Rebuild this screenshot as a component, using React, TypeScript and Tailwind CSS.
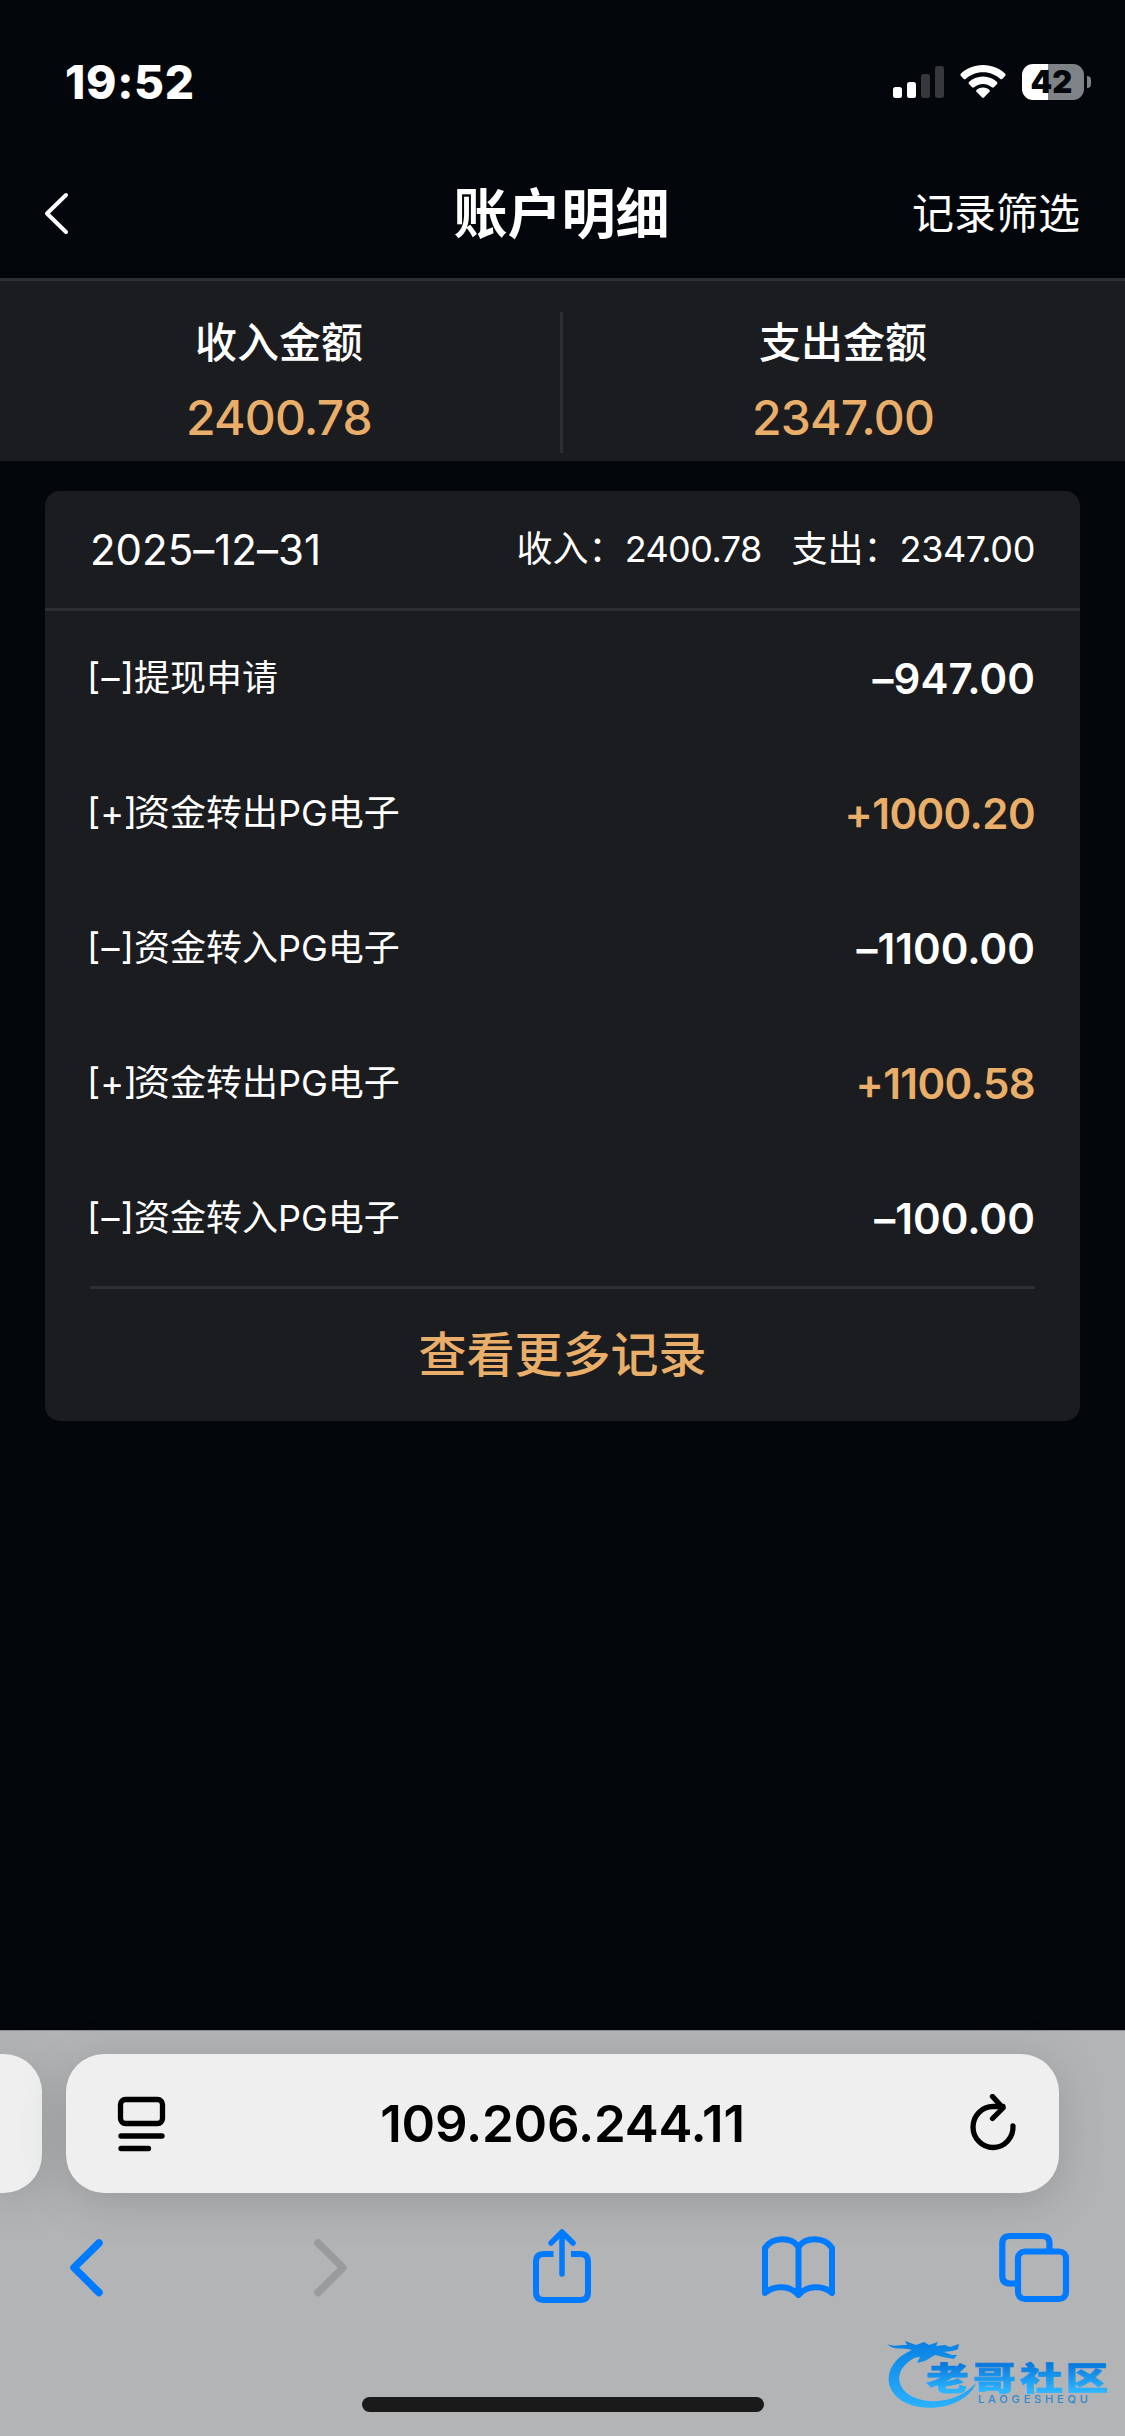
import React from "react";

type Entry = { sign: "+" | "–"; label: string; amount: string };

const entries: Entry[] = [
  { sign: "–", label: "提现申请", amount: "947.00" },
  { sign: "+", label: "资金转出PG电子", amount: "1000.20" },
  { sign: "–", label: "资金转入PG电子", amount: "1100.00" },
  { sign: "+", label: "资金转出PG电子", amount: "1100.58" },
  { sign: "–", label: "资金转入PG电子", amount: "100.00" },
];

function StatusBar() {
  return (
    <div className="flex h-[148px] items-start justify-between pt-[54px] pr-[34px] pl-[65px]">
      <span className="text-[46px] leading-[56px] font-extrabold tracking-[0.7px]">19:52</span>
      <div className="flex pt-[8px]">
        <svg className="h-[40px] w-[115px]" viewBox="892 62 115 40" fill="#fff">
          <rect x="893" y="87" width="9" height="11" rx="2.5" />
          <rect x="907" y="82" width="9" height="16" rx="2.5" />
          <rect x="921" y="74" width="9" height="24" rx="2.5" fill="#35373b" />
          <rect x="935" y="66" width="9" height="32" rx="2.5" fill="#35373b" />
          <path d="M983 65C974 65 966 68.500 960.500 74L960.500 75.500L964 79.300L965.300 79.300C970 75 976 72.300 983 72.300C990 72.300 996 75 1000.700 79.300L1002 79.300L1005.500 75.500L1005.500 74C1000 68.500 992 65 983 65Z" />
          <path d="M983 76.500C977.500 76.500 972.500 78.700 968.700 82.200L968.700 83.700L972.400 87.600L973.700 87.600C976.200 85.300 979.400 83.900 983 83.900C986.600 83.900 989.800 85.300 992.300 87.600L993.600 87.600L997.300 83.700L997.300 82.200C993.500 78.700 988.500 76.500 983 76.500Z" />
          <path d="M983 87.600C980.300 87.600 978 88.600 976.300 90.200L976.300 91.400L982.300 97.800L983.700 97.800L989.700 91.400L989.700 90.200C988 88.600 985.700 87.600 983 87.600Z" />
        </svg>
        <div className="mt-[2px] ml-[15px] flex h-[36px] w-[62px] items-center justify-center rounded-[11px] bg-[linear-gradient(90deg,#fff_26px,#808386_26px)] pr-[3px] text-[31px] leading-[36px] font-black text-[#04070c]">
          42
        </div>
        <div className="mt-[14px] ml-[3px] h-[12px] w-[4px] rounded-r-full bg-[#808386]" />
      </div>
    </div>
  );
}

function NavBar() {
  return (
    <header className="grid h-[133px] grid-cols-[1fr_auto_1fr] items-center border-b-[3px] border-[#2b2f32] pr-[45px] pl-[40px]">
      <svg className="h-[50px] w-[34px]" viewBox="40 188 34 50" fill="none" stroke="#fff" strokeWidth="4" strokeLinecap="round" strokeLinejoin="round">
        <path d="M66 195L47 213.500L66 232" />
      </svg>
      <h1 className="ml-[3px] pt-[3px] text-[54px] leading-[60px] font-bold">账户明细</h1>
      <span className="justify-self-end pt-px text-[42px] leading-[50px]">记录筛选</span>
    </header>
  );
}

function Total({ label, value }: { label: string; value: string }) {
  return (
    <div className="flex flex-col items-center pt-[34px] pr-[2px]">
      <span className="text-[42px] leading-[56px] font-medium">{label}</span>
      <span className="mt-[18px] text-[48px] leading-[58px] font-[450] tracking-[-0.8px] text-[#e9ae6a]">{value}</span>
    </div>
  );
}

function Toolbar() {
  const box = "h-[90px] w-[100px]";
  const blue = { fill: "none", stroke: "#007aff", strokeLinecap: "round", strokeLinejoin: "round" } as const;
  return (
    <nav className="flex justify-between pt-[27px] pr-[41px] pl-[36px]">
      <svg className={box} viewBox="36 2220 100 90" {...blue} strokeWidth="7.500">
        <path d="M99 2243L74 2267.700L99 2292.500" />
      </svg>
      <svg className={box} viewBox="273 2220 100 90" {...blue} stroke="#9a9b9d" strokeWidth="7.500">
        <path d="M318 2243L343 2267.700L318 2292.500" />
      </svg>
      <svg className={box} viewBox="510 2220 100 90" {...blue} strokeWidth="6">
        <path strokeLinecap="butt" d="M553.500 2254H544C538.500 2254 536 2256.500 536 2262V2292C536 2297.500 538.500 2300 544 2300H580C585.500 2300 588 2297.500 588 2292V2262C588 2256.500 585.500 2254 580 2254H571" />
        <path strokeWidth="5.500" d="M562 2274V2232M551 2243L562 2232L573 2243" />
      </svg>
      <svg className={box} viewBox="747 2220 100 90" {...blue} strokeWidth="6">
        <path d="M798.500 2247C792 2237 773 2236 765 2248V2293C774 2285 790 2285 798.500 2295C807 2285 823 2285 832 2293V2248C824 2236 805 2237 798.500 2247V2294" />
      </svg>
      <svg className={box} viewBox="984 2220 100 90" {...blue} strokeWidth="6.200">
        <rect x="1018" y="2251.500" width="48" height="47.500" rx="7" />
        <path strokeLinecap="butt" d="M1017 2283.500H1010C1005 2283.500 1002.300 2281 1002.300 2276V2243.500C1002.300 2238.500 1005 2236 1010 2236H1042C1047 2236 1049.500 2238.500 1049.500 2243.500V2250" />
      </svg>
    </nav>
  );
}

function Watermark() {
  return (
    <svg className="absolute top-[2330px] left-[880px] h-[90px] w-[240px]" viewBox="880 2330 240 90">
      <defs>
        <linearGradient id="ring" x1="0" y1="2340" x2="0" y2="2409" gradientUnits="userSpaceOnUse">
          <stop offset="0" stopColor="#087fe2" />
          <stop offset="1" stopColor="#2bb2ff" />
        </linearGradient>
        <linearGradient id="word" x1="0" y1="-28" x2="0" y2="2" gradientUnits="userSpaceOnUse">
          <stop offset="0" stopColor="#0878dc" />
          <stop offset="1" stopColor="#2db6ff" />
        </linearGradient>
      </defs>
      <g fill="url(#ring)">
        <path d="M912 2350C883 2362 881 2391 906 2403C934 2415 969 2403 976 2383C963 2398 936 2407 913 2397C893 2387 894 2365 921 2355Z" />
        <path d="M887 2344C893 2347 899 2345 907 2345L905 2341L916 2345L924 2342L929 2345L938 2342L936 2346L945 2345L950 2347L959 2344L958 2349C953 2352 947 2351 944 2352L952 2355L957 2355L954 2359L943 2357L935 2355L925 2361L917 2363L920 2357L911 2358L902 2357L912 2350C903 2347 894 2351 887 2344Z" />
      </g>
      <g fill="url(#word)" stroke="url(#word)" strokeWidth="0.8" fontFamily="'Noto Sans CJK SC', sans-serif" fontWeight="900" fontSize="34">
        <text transform="translate(926 2389.500) scale(1.250 .92)">老</text>
        <text transform="translate(973 2389.500) scale(1.250 .92)">哥</text>
        <text transform="translate(1020 2389.500) scale(1.250 .92)">社</text>
        <text transform="translate(1065.500 2389.500) scale(1.250 .92)">区</text>
      </g>
      <text x="978" y="2402.500" textLength="110" fontFamily="Inter, sans-serif" fontSize="11" fontWeight="500" fill="#2f88cf">LAOGESHEQU</text>
    </svg>
  );
}

function BrowserBar() {
  return (
    <footer className="flex h-[406px] flex-col border-t border-[#8e8f93] bg-[#b3b4b6]">
      <div className="flex gap-[24px] overflow-x-clip pt-[23px] pr-[66px]">
        <div className="h-[139px] w-[42px] shrink-0 rounded-r-[38px] bg-[#efefef] shadow-[0_8px_44px_rgba(80,90,90,0.3)]" />
        <div className="flex h-[139px] flex-1 items-center justify-between rounded-[38px] bg-[#efefef] pr-[40px] pl-[50px] text-black shadow-[0_8px_44px_rgba(80,90,90,0.3)]">
          <svg className="h-[60px] w-[52px]" viewBox="116 2094 52 60" fill="none" stroke="#000" strokeWidth="5.300" strokeLinecap="round">
            <rect x="120.500" y="2099.500" width="42" height="24" rx="5" />
            <path d="M121 2136H162M121 2148.500H148.500" />
          </svg>
          <span className="mr-[10px] text-[51px] leading-[60px] font-[600] tracking-[-0.2px]">109.206.244.11</span>
          <svg className="h-[60px] w-[52px]" viewBox="967 2093 52 60" fill="none" stroke="#000" strokeWidth="5.300" strokeLinecap="round" strokeLinejoin="round">
            <path d="M1013 2125A20 20.500 0 1 1 993.500 2105.500H1003" />
            <path d="M992.500 2095.500L1003 2107L992.500 2117.500" />
          </svg>
        </div>
      </div>
      <Toolbar />
      <div className="mt-[87px] ml-[362px] h-[15px] w-[402px] rounded-full bg-[#1a1a1a]" />
    </footer>
  );
}

export default function App() {
  return (
    <div className="relative flex h-[2436px] w-[1125px] flex-col overflow-hidden bg-[#03070c] font-[Inter,'Noto_Sans_CJK_SC',sans-serif] text-white">
      <StatusBar />
      <NavBar />
      <section className="grid h-[180px] grid-cols-[560px_3px_562px] bg-[#1b1c20]">
        <Total label="收入金额" value="2400.78" />
        <div className="mt-[31px] h-[141px] bg-[#2d2e33]" />
        <Total label="支出金额" value="2347.00" />
      </section>
      <main className="flex-1 px-[45px] pt-[30px] [font-feature-settings:'calt'_0]">
        <article className="flex h-[930px] flex-col rounded-[15px] bg-[#1b1c20]">
          <div className="flex h-[120px] items-center justify-between border-b-[3px] border-[#2d2e33] px-[45px]">
            <span className="text-[42px] leading-[50px]">2025–12–31</span>
            <div className="flex gap-[30px] pb-[2px] text-[36px] leading-[44px]">
              <span>
                收入：<span className="tracking-[-0.6px]">2400.78</span>
              </span>
              <span>
                支出：<span className="tracking-[-0.4px]">2347.00</span>
              </span>
            </div>
          </div>
          <ul className="mx-[45px] border-b-[3px] border-[#2d2e33]">
            {entries.map((e, i) => (
              <li key={i} className="flex h-[135px] items-center justify-between">
                <span className="-ml-[3px] flex pb-[1px] text-[36px] leading-[44px]">
                  <span className="flex w-[47px] justify-between [font-feature-settings:'calt'_0,'case'_1]">
                    <span>[</span>
                    <span className="[font-feature-settings:'calt'_0,'case'_0]">{e.sign}</span>
                    <span>]</span>
                  </span>
                  <span>{e.label}</span>
                </span>
                <span className={e.sign === "+" ? "text-[42px] leading-[50px] font-semibold tracking-[-0.6px] text-[#e9ae6a]" : "text-[42px] leading-[50px] font-semibold"}>
                  {e.sign}
                  {e.amount}
                </span>
              </li>
            ))}
          </ul>
          <button className="flex-1 pb-px text-[48px] leading-[56px] font-medium text-[#e9ae6a]">查看更多记录</button>
        </article>
      </main>
      <BrowserBar />
      <Watermark />
    </div>
  );
}
